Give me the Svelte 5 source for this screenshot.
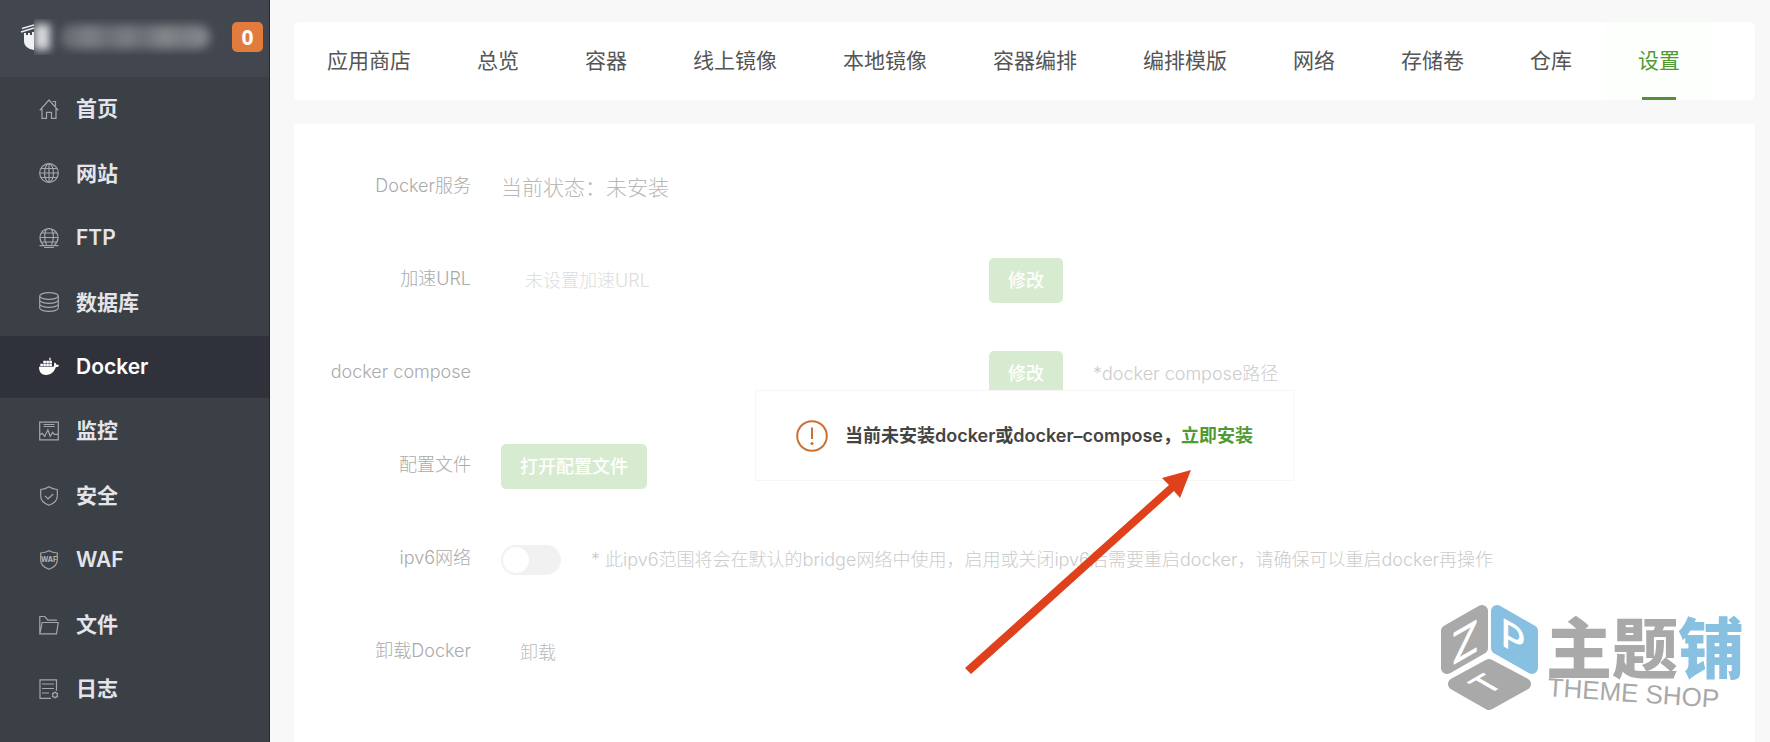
<script>
  const menu = [
    { label: '首页', icon: 'home' },
    { label: '网站', icon: 'globe' },
    { label: 'FTP', icon: 'ftp' },
    { label: '数据库', icon: 'database' },
    { label: 'Docker', icon: 'docker' },
    { label: '监控', icon: 'monitor' },
    { label: '安全', icon: 'shield' },
    { label: 'WAF', icon: 'waf' },
    { label: '文件', icon: 'folder' },
    { label: '日志', icon: 'log' }
  ];
  const tabs = ['应用商店', '总览', '容器', '线上镜像', '本地镜像', '容器编排', '编排模版', '网络', '存储卷', '仓库', '设置'];
  let activeMenu = $state('Docker');
  let activeTab = $state('设置');
  let mirrorUrl = $state('');
  let composePath = $state('');
  let ipv6 = $state(false);
</script>

<div class="app">
  <aside class="sidebar">
    <header class="server">
      <svg class="brand" width="14" height="30" viewBox="0 0 14 30" aria-hidden="true">
        <path d="M2 6.500 14 3M1 10l13-4" stroke="#e8eaee" stroke-width="1.600" fill="none" />
        <path d="M4 11h2v2h2v-2h2v2h2v-3h2V28C8 27 4 24 4 19z" fill="#eef0f3" />
      </svg>
      <div class="masked" aria-hidden="true">
        <i class="dot"></i><i class="bar"></i>
      </div>
      <span class="badge">0</span>
    </header>
    <nav class="menu">
      {#each menu as item}
        <a href="#{item.icon}" class:active={activeMenu === item.label} onclick={() => (activeMenu = item.label)}>
          <svg width="20" height="20" viewBox="0 0 20 20" aria-hidden="true">
            {#if item.icon === 'home'}
              <path d="M.7 11.300 10 1l9.300 10.300M3 9.500v9.800h4.500v-6h5v6H17V9.500M13.500 2.500h3v4.800" />
            {:else if item.icon === 'globe'}
              <circle cx="10" cy="10" r="9.300" />
              <ellipse cx="10" cy="10" rx="4.500" ry="9.300" />
              <path d="M10 .7v18.600M.7 10h18.600M2 5.500h16M2 14.500h16" />
            {:else if item.icon === 'ftp'}
              <path d="M4.500 16.700a9 9 0 1 1 11 0" />
              <path d="M7.500 16.700C5 12 5 5.500 7.500 1M12.500 16.700C15 12 15 5.500 12.500 1M1 9.500h18M2.500 5h15M2.500 14h15" />
              <path d="M.5 17.700h19M5 19.500h10" />
            {:else if item.icon === 'database'}
              <ellipse cx="10" cy="4" rx="9.300" ry="3.300" />
              <path d="M.7 4v12c0 1.800 4 3.300 9.300 3.300s9.300-1.500 9.300-3.300V4M.7 8c0 1.800 4 3.300 9.300 3.300S19.300 9.800 19.300 8M.7 12c0 1.800 4 3.300 9.300 3.300s9.300-1.500 9.300-3.300" />
            {:else if item.icon === 'docker'}
              <g class="solid">
                <path d="M0 9.800h14.200c.8-.3 1.100-.9 1-1.700-.1-.7-.4-1.300-.1-1.900l.7-.6c1 .6 1.500 1.300 1.600 2.300 1-.1 1.900 0 2.600.5-.5 1.200-1.500 1.700-3.100 1.700C15.200 15 12 18 7.200 18 2.500 18 0 15.200 0 9.800z" />
                <path d="M1.300 6.800h2.600v2.500H1.300zM4.300 6.800h2.600v2.500H4.300zM7.300 6.800h2.600v2.500H7.300zM10.300 6.800h2.600v2.500h-2.600zM4.300 3.800h2.600v2.500H4.300zM7.300 3.800h2.600v2.500H7.300zM10.300 3.800h2.600v2.500h-2.600zM10.300.8h1.300v2.500h-1.300z" />
              </g>
            {:else if item.icon === 'monitor'}
              <path d="M.7 1.200h18.600v17.600H.7zM4.500 3.500h11M4.500 5.500h11M1 13.800l2.200-1.500 2.500 3 3.200-6.500 2.300 6.500 2.500-4 1.500 2h3.800" />
            {:else if item.icon === 'shield'}
              <path d="M10 .8c2.500 1.700 5 2.500 8.300 2.700V10c0 4.300-3 7.300-8.300 9.300-5.300-2-8.300-5-8.300-9.300V3.500C5 3.300 7.500 2.500 10 .8zM6 9.800l3 3L14.300 8" />
            {:else if item.icon === 'waf'}
              <path d="M10 .8c2.500 1.400 5 2 8.300 2.200V10c0 4.300-3 7.300-8.300 9.300-5.300-2-8.300-5-8.300-9.300V3C5 2.800 7.500 2.200 10 .8z" />
              <text x="10" y="12">WAF</text>
            {:else if item.icon === 'folder'}
              <path d="M.8 18.800V1.500h5l3 3.700H18M.8 18.800 3.200 7.500h16l-1.700 11.300z" />
            {:else}
              <path d="M12 19.300H1V.8h16.500v11M3 5h12M3 9.500h12M3 14h7" />
              <circle cx="16" cy="16" r="2.400" />
              <path d="M16 12.500v1.200M16 18.300v1.200M13 14.200l1 .6M18 17.200l1 .6M13 17.800l1-.6M18 14.800l1-.6" />
            {/if}
          </svg>
          <span>{item.label}</span>
        </a>
      {/each}
    </nav>
  </aside>

  <main>
    <nav class="tabs">
      {#each tabs as tab}
        <button type="button" class:active={activeTab === tab} onclick={() => (activeTab = tab)}>{tab}</button>
      {/each}
    </nav>

    <section class="panel">
      <form class="settings">
        <div class="row">
          <span class="label">Docker服务</span>
          <span class="status">当前状态：未安装</span>
        </div>
        <div class="row">
          <label class="label" for="mirror">加速URL</label>
          <input class="field" id="mirror" type="text" placeholder="未设置加速URL" bind:value={mirrorUrl} />
          <button class="primary" type="button">修改</button>
        </div>
        <div class="row">
          <label class="label" for="compose">docker compose</label>
          <input class="field" id="compose" type="text" bind:value={composePath} />
          <button class="primary" type="button">修改</button>
          <span class="hint">*docker compose路径</span>
        </div>
        <div class="row">
          <span class="label">配置文件</span>
          <button class="primary" type="button">打开配置文件</button>
        </div>
        <div class="row">
          <label class="label" for="ipv6">ipv6网络</label>
          <input class="switch" id="ipv6" type="checkbox" bind:checked={ipv6} />
          <span class="hint">* 此ipv6范围将会在默认的bridge网络中使用，启用或关闭ipv6后需要重启docker，请确保可以重启docker再操作</span>
        </div>
        <div class="row">
          <span class="label">卸载Docker</span>
          <button class="plain" type="button">卸载</button>
        </div>
      </form>

      <div class="overlay">
        <div class="notice" role="alert">
          <svg width="32" height="32" viewBox="0 0 32 32" aria-hidden="true">
            <circle cx="16" cy="16" r="14.800" fill="none" stroke="#cc7134" stroke-width="2" />
            <path d="M16 7.500v11.500" stroke="#cc7134" stroke-width="2" />
            <circle cx="16" cy="23.500" r="1.500" fill="#cc7134" />
          </svg>
          <p>当前未安装docker或docker–compose，<a href="#install">立即安装</a></p>
        </div>
      </div>

      <svg class="arrow" width="228" height="206" viewBox="0 0 228 206" aria-hidden="true">
        <path d="M227 1 198 9l7 7L1 199l6 6L210 22l6 7z" fill="#df411d" />
      </svg>

      <svg class="watermark" width="340" height="172" viewBox="-30 -30 340 172" role="img" aria-label="主题铺 THEME SHOP">
        <g stroke-linejoin="round" stroke-width="12">
          <path d="M8 31 43 11V48L8 68z" fill="#a9a9a9" stroke="#a9a9a9" />
          <path d="M58 11 93 31V68L58 48z" fill="#88c0e2" stroke="#88c0e2" />
          <path d="M50 65 86 84 50 104 15 84z" fill="#a9a9a9" stroke="#a9a9a9" />
        </g>
        <g class="faces">
          <text font-size="44" transform="translate(26 42) skewY(-30)" y="16">Z</text>
          <text font-size="39" transform="translate(74 38) skewY(30)" y="14">P</text>
          <text font-size="34" transform="matrix(.87 -.5 .87 .5 47 84)" y="12">T</text>
        </g>
        <text class="shop" x="107" y="73">主题<tspan class="blue">铺</tspan></text>
        <text class="latin" transform="rotate(4 108 97)" x="108" y="96">THEME SHOP</text>
      </svg>
    </section>
  </main>
</div>

<style>
  :global(body) { background: #f8f8f8; }
  .app {
    display: flex;
    min-height: 100vh;
    font-family: Inter, "Noto Sans CJK SC", sans-serif;
    line-height: 1.5;
    color: #555;
  }
  .app * { box-sizing: border-box; }
  button, input { font: inherit; margin: 0; }
  a { text-decoration: none; }

  .sidebar {
    display: flex;
    flex-direction: column;
    flex: 0 0 270px;
    background: #3b4047;
    border-right: 1px solid #25282c;
  }
  .server {
    display: flex;
    align-items: center;
    height: 77px;
    padding: 0 6px 4px 20px;
    background: #42464f;
  }
  .masked {
    display: flex;
    align-items: center;
    gap: 10px;
    flex: 1;
    height: 36px;
    overflow: hidden;
  }
  .masked i { flex: none; }
  .masked .dot { width: 16px; height: 26px; background: #d8dadd; filter: blur(4px); }
  .masked .bar {
    width: 150px;
    height: 24px;
    border-radius: 12px;
    background: linear-gradient(90deg, #62666d, #7d8186 20%, #6a6e74 32%, #7b7f84 45%, #6a6e74 55%, #84888c 70%, #787c81 80%, #868a8e);
    filter: blur(5px);
  }
  .badge {
    width: 31px;
    height: 30px;
    border-radius: 5px;
    background: #e27b3e;
    color: #fff;
    font-family: "Noto Sans", sans-serif;
    font-size: 21px;
    font-weight: 700;
    line-height: 30px;
    text-align: center;
  }
  .menu {
    display: flex;
    flex: 1;
    flex-direction: column;
    justify-content: space-between;
    padding: 1px 0 22px;
  }
  .menu a {
    display: flex;
    align-items: center;
    gap: 17px;
    height: 62px;
    padding-left: 39px;
    color: #e3e5ea;
    font-size: 21px;
    font-weight: 600;
  }
  .menu a.active { background: #2f323a; color: #fff; }
  .menu svg { fill: none; stroke: #a3a7ab; stroke-width: 1.200; }
  .menu .solid { fill: #fff; stroke: none; }
  .menu text { fill: #b4b7bb; stroke: none; font-size: 7px; font-weight: 700; text-anchor: middle; }

  main {
    display: flex;
    flex: 1;
    flex-direction: column;
    gap: 24px;
    min-width: 0;
    padding: 22px 15px 0 24px;
  }
  .tabs {
    display: flex;
    height: 78px;
    border-radius: 5px;
    background: #fff;
  }
  .tabs button {
    position: relative;
    padding: 0 33px;
    border: 0;
    background: none;
    color: #555;
    font-size: 21px;
    white-space: nowrap;
  }
  .tabs .active { background: #fdfffc; color: #4f9a33; }
  .tabs .active::after {
    content: "";
    position: absolute;
    bottom: 0;
    left: 50%;
    width: 34px;
    height: 3px;
    margin-left: -17px;
    background: #559039;
  }

  .panel {
    position: relative;
    flex: 1;
    background: #fff;
  }
  .settings { padding-top: 17px; font-size: 18px; font-weight: 300; }
  .row { display: flex; align-items: center; height: 93px; white-space: nowrap; }
  .label {
    width: 177px;
    margin-right: 30px;
    padding-bottom: 4px;
    color: #aaa;
    text-align: right;
  }
  .status { color: #b8b8b8; font-size: 21px; }
  .field {
    width: 468px;
    height: 45px;
    margin-right: 20px;
    padding: 0 24px;
    border: 0;
    background: transparent;
    color: #aaa;
  }
  .field::placeholder { color: #ddd; opacity: 1; }
  .primary {
    height: 45px;
    padding: 0 19px;
    border: 0;
    border-radius: 5px;
    background: #d7ebd0;
    color: #fff;
    font-weight: 500;
  }
  .plain { padding: 0 19px; border: 0; background: none; color: #bbb; }
  .hint { margin-left: 30px; color: #ccc; }
  .switch {
    display: flex;
    align-items: center;
    width: 60px;
    height: 30px;
    padding: 2px;
    border-radius: 15px;
    background: #f1f1f1;
    appearance: none;
  }
  .switch::before {
    content: "";
    width: 26px;
    height: 26px;
    border-radius: 50%;
    background: #fff;
  }
  .switch:checked { justify-content: flex-end; background: #d7ebd0; }

  .overlay {
    position: absolute;
    inset: 0;
    display: flex;
    align-items: flex-start;
    justify-content: center;
    padding-top: 266px;
    pointer-events: none;
  }
  .notice {
    display: flex;
    align-items: center;
    gap: 17px;
    height: 91px;
    padding: 0 40px;
    border: 1px solid #f6f6f6;
    background: #fff;
    pointer-events: auto;
  }
  .notice p { margin: 0; color: #444; font-size: 18px; font-weight: 600; white-space: nowrap; }
  .notice a { color: #4f9a33; }

  .arrow {
    position: absolute;
    top: 345px;
    left: 50%;
    margin-left: -61px;
    pointer-events: none;
  }
  .watermark {
    position: absolute;
    right: 6px;
    bottom: 0;
    pointer-events: none;
  }
  .faces text { fill: #fff; font-weight: 500; text-anchor: middle; }
  .shop { fill: #a9a9a9; font-family: "Noto Sans CJK SC", sans-serif; font-size: 66px; font-weight: 900; }
  .shop .blue { fill: #88c0e2; }
  .latin { fill: #a9a9a9; font-family: "Liberation Sans", sans-serif; font-size: 26px; }
</style>
